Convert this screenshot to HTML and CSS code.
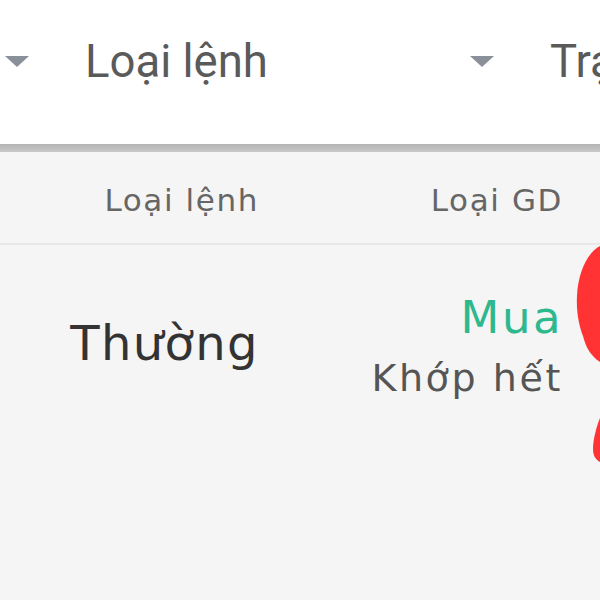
FILE: index.html
```html
<!DOCTYPE html>
<html lang="vi">
<head>
  <meta charset="UTF-8" />
  <meta name="viewport" content="width=device-width, initial-scale=1.0" />
  <title>Lịch sử lệnh</title>
  <link rel="stylesheet" href="styles.css">
</head>
<body>
  <header class="filters">
    <div class="filter filter-first">
      <span class="caret"></span>
      <span class="filter-label">Loại lệnh</span>
    </div>
    <div class="filter">
      <span class="caret"></span>
      <span class="filter-label">Trạng thái</span>
    </div>
  </header>
  <div class="shade"></div>

  <div class="table">
    <div class="row head">
      <div class="cell col-type">Loại lệnh</div>
      <div class="cell col-side">Loại GD</div>
    </div>
    <div class="row item">
      <div class="cell col-type normal">Thường</div>
      <div class="cell col-side">
        <div class="side buy">Mua</div>
        <div class="status">Khớp hết</div>
      </div>
    </div>
  </div>

  <svg class="mark" width="40" height="230" viewBox="0 0 40 230">
    <path d="M40 4 C28 10 18 30 17 54 C16 72 20 86 23 94 C26 106 31 114 40 120 Z" fill="#ff3333"/>
    <path d="M40 176 C36 186 33 198 33 207 C33 214 36 218 40 220 Z" fill="#ff3333"/>
  </svg>
</body>
</html>
```

FILE: styles.css
```css
html, body {
  margin: 0;
  padding: 0;
  background: #f5f5f5;
  overflow: hidden;
}
body {
  position: relative;
  width: 600px;
  height: 600px;
}
.filters {
  display: flex;
  height: 144px;
  background: #fff;
  font-family: Roboto, sans-serif;
  overflow: hidden;
}
.filter {
  display: flex;
  flex-shrink: 0;
  align-items: center;
  gap: 56px;
  white-space: nowrap;
  padding-bottom: 22px;
}
.filter-first {
  width: 465px;
  margin-left: 5px;
}
.caret {
  width: 0;
  height: 0;
  border-left: 12px solid transparent;
  border-right: 12px solid transparent;
  border-top: 11px solid #8a9099;
}
.filter-label {
  font-size: 45.5px;
  color: #5a5a5a;
}
.shade {
  height: 8px;
  background: linear-gradient(#b4b4b4, #c8c8c8);
}
.table {
  font-family: "DejaVu Sans", sans-serif;
}
.row {
  display: flex;
}
.head {
  height: 93px;
  align-items: center;
  border-bottom: 2px solid #e8e8e8;
  color: #666;
  font-size: 31px;
  letter-spacing: 1.6px;
  padding-top: 4px;
  box-sizing: border-box;
}
.cell {
  text-align: right;
  white-space: nowrap;
}
.col-type {
  width: 259px;
}
.col-side {
  width: 304px;
}
.item {
  padding-top: 45px;
}
.normal {
  font-size: 48px;
  letter-spacing: 1.4px;
  color: #333;
  padding-top: 25px;
}
.side {
  font-size: 45px;
  letter-spacing: 2.5px;
  line-height: 56px;
}
.buy {
  color: #2db88e;
}
.status {
  font-size: 38px;
  letter-spacing: 2.6px;
  line-height: 64px;
  color: #555;
}
.mark {
  position: absolute;
  right: 0;
  top: 242px;
}
```
